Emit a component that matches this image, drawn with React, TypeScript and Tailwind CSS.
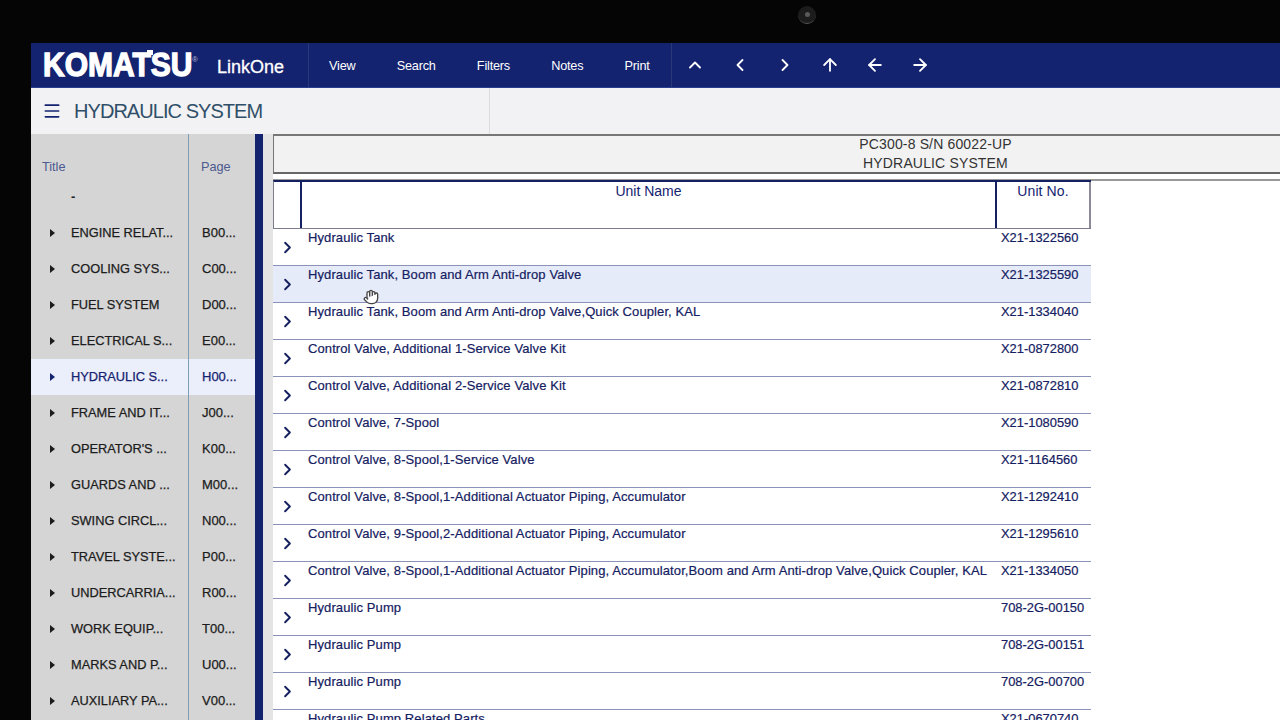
import { ChevronUp, ChevronLeft, ChevronRight, ArrowUp, ArrowLeft, ArrowRight, Menu, Hand } from "lucide-react"

const sideItems = [
  { title: "ENGINE RELAT...", page: "B00..." },
  { title: "COOLING SYS...", page: "C00..." },
  { title: "FUEL SYSTEM", page: "D00..." },
  { title: "ELECTRICAL S...", page: "E00..." },
  { title: "HYDRAULIC S...", page: "H00...", active: true },
  { title: "FRAME AND IT...", page: "J00..." },
  { title: "OPERATOR'S ...", page: "K00..." },
  { title: "GUARDS AND ...", page: "M00..." },
  { title: "SWING CIRCL...", page: "N00..." },
  { title: "TRAVEL SYSTE...", page: "P00..." },
  { title: "UNDERCARRIA...", page: "R00..." },
  { title: "WORK EQUIP...", page: "T00..." },
  { title: "MARKS AND P...", page: "U00..." },
  { title: "AUXILIARY PA...", page: "V00..." },
]

const rows = [
  { name: "Hydraulic Tank", no: "X21-1322560" },
  { name: "Hydraulic Tank, Boom and Arm Anti-drop Valve", no: "X21-1325590", active: true },
  { name: "Hydraulic Tank, Boom and Arm Anti-drop Valve,Quick Coupler, KAL", no: "X21-1334040" },
  { name: "Control Valve, Additional 1-Service Valve Kit", no: "X21-0872800" },
  { name: "Control Valve, Additional 2-Service Valve Kit", no: "X21-0872810" },
  { name: "Control Valve, 7-Spool", no: "X21-1080590" },
  { name: "Control Valve, 8-Spool,1-Service Valve", no: "X21-1164560" },
  { name: "Control Valve, 8-Spool,1-Additional Actuator Piping, Accumulator", no: "X21-1292410" },
  { name: "Control Valve, 9-Spool,2-Additional Actuator Piping, Accumulator", no: "X21-1295610" },
  { name: "Control Valve, 8-Spool,1-Additional Actuator Piping, Accumulator,Boom and Arm Anti-drop Valve,Quick Coupler, KAL", no: "X21-1334050" },
  { name: "Hydraulic Pump", no: "708-2G-00150" },
  { name: "Hydraulic Pump", no: "708-2G-00151" },
  { name: "Hydraulic Pump", no: "708-2G-00700" },
  { name: "Hydraulic Pump Related Parts", no: "X21-0670740" },
]

const navItems = ["View", "Search", "Filters", "Notes", "Print"]
const navIcons = [ChevronUp, ChevronLeft, ChevronRight, ArrowUp, ArrowLeft, ArrowRight]

export default function App() {
  return (
    <div className="relative h-[720px] w-[1280px] overflow-hidden bg-[#050505] pl-[31px] pt-[43px] font-['Liberation_Sans',Arial,sans-serif]">
      {/* webcam */}
      <div className="absolute left-[798px] top-[6px] flex h-[18px] w-[18px] items-center justify-center rounded-full border-b border-[#555] bg-[#1c1c1c]">
        <div className="h-[5px] w-[5px] rounded-full bg-[#5a5a5a]" />
      </div>

      <div className="flex h-[45px] items-center border-b border-[#2a3f8f] bg-[#14236f] text-white">
        <div className="relative flex h-full w-[278px] items-center border-r border-[#2a3878]">
          <span className="ml-[12px] w-[148px] scale-y-[1.12] text-[30px] leading-none font-bold [-webkit-text-stroke:1.2px_white]">
            KOMATSU
          </span>
          <span className="absolute left-[116px] top-[7px] h-[5px] w-[6px] bg-white" />
          <span className="-mt-[10px] ml-[1px] text-[8px] text-[#b8bcd4]">®</span>
          <span className="ml-[19px] pt-[4px] text-[18px] font-normal [-webkit-text-stroke:0.3px_white]">LinkOne</span>
        </div>
        <div className="flex h-full w-[363px] items-center border-r border-[#2a3878] pt-[4px] pl-[20px] text-[12.7px]">
          {navItems.map((item) => (
            <span key={item} className="mr-[41.2px] tracking-[-0.2px] last:mr-0">
              {item}
            </span>
          ))}
        </div>
        <div className="flex items-center gap-[25px] pl-[13px]">
          {navIcons.map((Icon, i) => (
            <Icon key={i} size={20} strokeWidth={2.2} className="text-white" />
          ))}
        </div>
      </div>

      <div className="flex h-[46px] items-center bg-[#f2f2f4]">
        <div className="flex h-full w-[459px] items-center border-r border-[#dcdcdf] pl-[11px]">
          <Menu size={20} strokeWidth={2} className="text-[#14236f]" />
          <span className="ml-[12px] text-[20px] tracking-[-0.95px] text-[#2f4f68]">HYDRAULIC SYSTEM</span>
        </div>
      </div>

      <div className="flex h-[586px] bg-[#e4e4e4]">
        <div className="flex w-[224px] shrink-0 flex-col overflow-hidden bg-[#d5d5d5]">
          <div className="flex h-[45px] shrink-0 text-[12.7px] text-[#4b5a8f]">
            <div className="h-full w-[158px] border-r border-[#7f9db3] pt-[24px] pl-[11px]">Title</div>
            <div className="pt-[24px] pl-[12px]">Page</div>
          </div>
          <div className="h-[36px] w-[158px] shrink-0 border-r border-[#7f9db3] pt-[8px] pl-[40px] text-[13px] font-bold text-[#222]">-</div>
          {sideItems.map((item) => (
            <div
              key={item.title}
              className={`flex h-[36px] shrink-0 items-center text-[12.8px] ${item.active ? "bg-[#ebeefb] text-[#14236f]" : "text-[#1c1c1c]"}`}
            >
              <div className="flex h-full w-[158px] items-center border-r border-[#7f9db3]">
                <span
                  className={`ml-[19px] h-0 w-0 border-y-[4px] border-l-[5px] border-y-transparent ${item.active ? "border-l-[#14236f]" : "border-l-[#1c1c1c]"}`}
                />
                <span className="ml-[16px] whitespace-nowrap [-webkit-text-stroke:0.25px_currentColor]">{item.title}</span>
              </div>
              <span className="ml-[13px] text-[13px] [-webkit-text-stroke:0.25px_currentColor]">{item.page}</span>
            </div>
          ))}
          <div className="w-[158px] flex-1 border-r border-[#7f9db3]" />
        </div>
        <div className="w-[8px] shrink-0 bg-[#14236f]" />
        <div className="w-[10px] shrink-0" />

        <div className="min-w-0 flex-1 overflow-hidden bg-white">
          <div className="flex h-[40px] w-[1324px] flex-col items-center border-y-2 border-l border-[#777] border-b-[#666] bg-[#f2f2f2] text-[14px] leading-[19px] tracking-[0.15px] text-[#333]">
            <span className="mt-[-1px]">PC300-8 S/N 60022-UP</span>
            <span>HYDRAULIC SYSTEM</span>
          </div>
          <div className="h-[7px] border-b-2 border-[#999]" />
          <div className="-mt-[1px] flex h-[49px] w-[818px] border-t-2 border-b border-l border-[#14205f] border-b-[#7d7d90] border-l-[#7d7d90] text-[14px] leading-[16px] text-[#14236f]">
            <div className="w-[28px] shrink-0 border-r-2 border-[#14205f]" />
            <div className="flex-1 pt-[1px] text-center">Unit Name</div>
            <div className="w-[96px] shrink-0 border-r-2 border-l-2 border-r-[#8a8a98] border-l-[#14205f] pt-[1px] text-center tracking-[0.1px]">
              Unit No.
            </div>
          </div>
          {rows.map((row) => (
            <div
              key={row.no}
              className={`flex h-[37px] w-[818px] border-b border-[#8a92b8] text-[13px] text-[#14205f] ${row.active ? "bg-[#e6ebfa]" : "bg-white"}`}
            >
              <div className="flex w-[28px] shrink-0 items-center justify-center">
                <ChevronRight size={19} strokeWidth={2.4} className="text-[#14205f]" />
              </div>
              <div className="w-[694px] shrink-0 pt-[1px] pl-[7px] leading-[15px] tracking-[0.1px] whitespace-nowrap [-webkit-text-stroke:0.2px_currentColor]">
                {row.name}
              </div>
              <div className="pt-[1px] pl-[6px] text-[12.9px] leading-[15px] whitespace-nowrap [-webkit-text-stroke:0.2px_currentColor]">{row.no}</div>
            </div>
          ))}
        </div>
      </div>

      {/* mouse pointer */}
      <div className="absolute left-[363px] top-[289px] text-[#444]">
        <Hand size={16} strokeWidth={2} fill="#ffffff" />
      </div>
    </div>
  )
}
